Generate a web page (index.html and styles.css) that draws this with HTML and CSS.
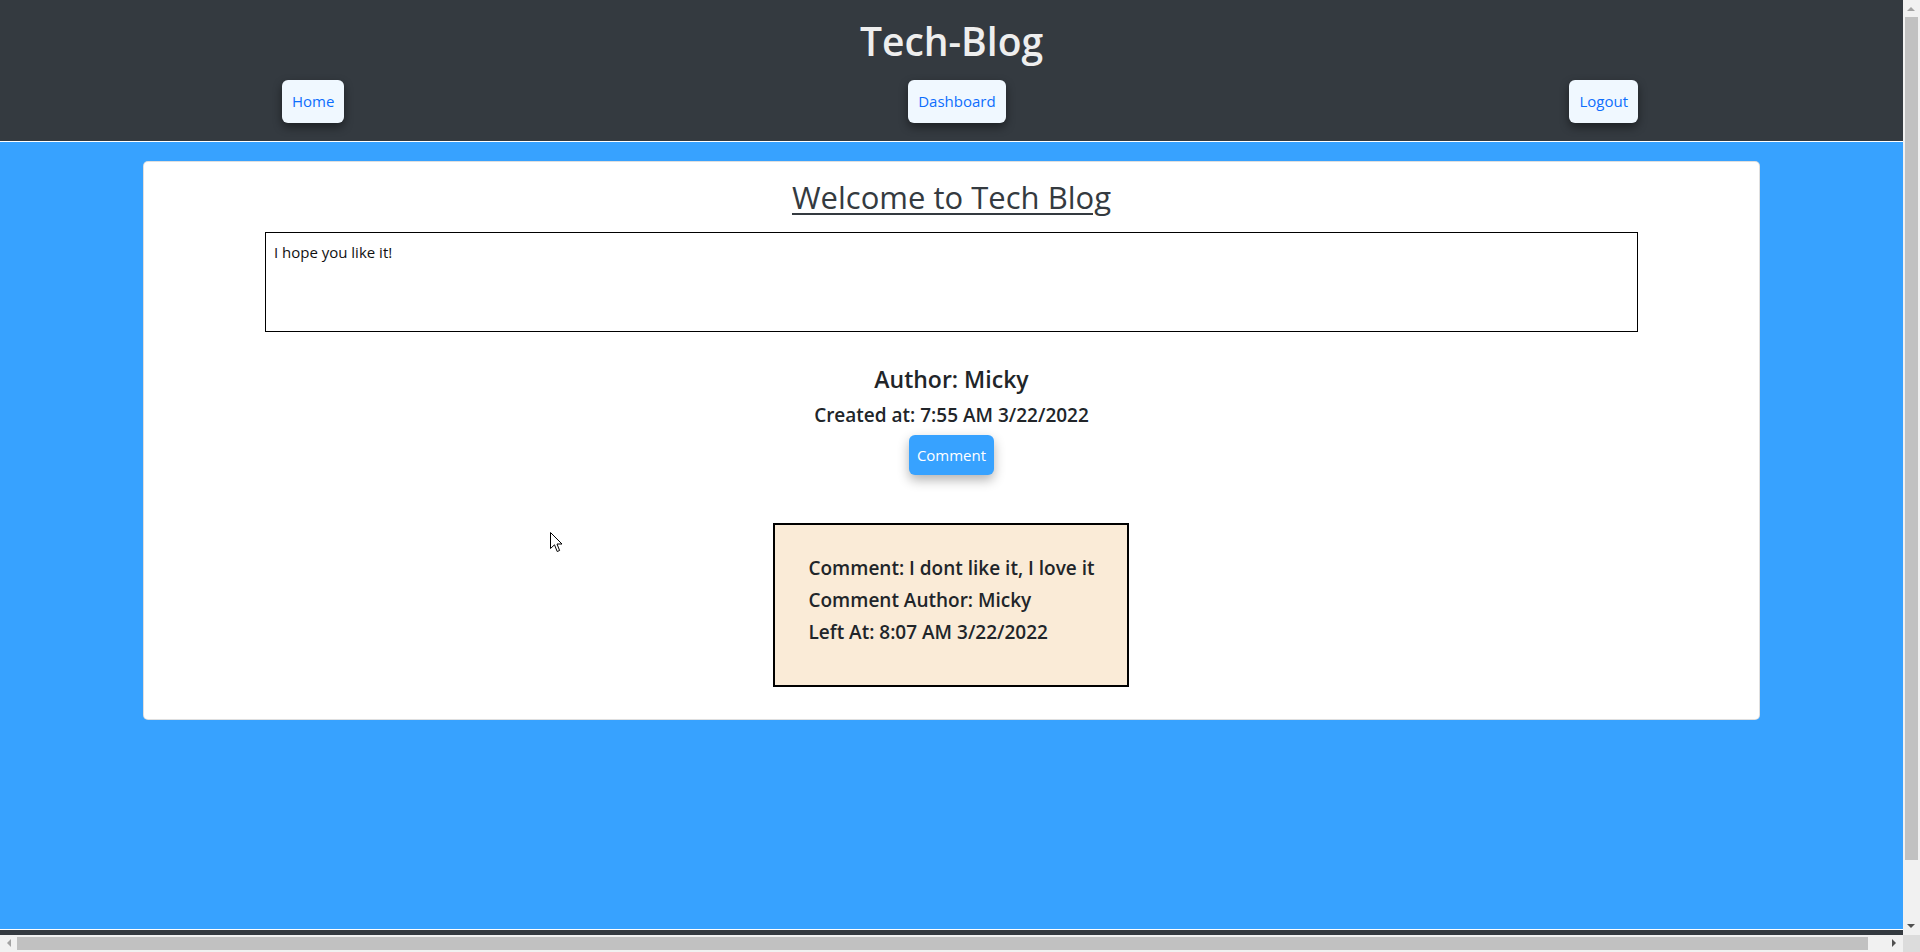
FILE: index.html
```html
<!DOCTYPE html>
<html lang="en">
<head>
<meta charset="utf-8">
<title>Tech-Blog</title>
<link rel="stylesheet" href="styles.css">
</head>
<body>
<div class="page">
  <header class="site-header">
    <h1 class="site-title">Tech-Blog</h1>
    <nav class="site-nav">
      <a class="nav-btn" href="#">Home</a>
      <a class="nav-btn" href="#">Dashboard</a>
      <a class="nav-btn" href="#">Logout</a>
    </nav>
  </header>
  <main class="main">
    <section class="post-card">
      <h2 class="post-title">Welcome to Tech Blog</h2>
      <textarea class="post-body" readonly>I hope you like it!</textarea>
      <h4 class="post-author">Author: Micky</h4>
      <h5 class="post-date">Created at: 7:55 AM 3/22/2022</h5>
      <button class="comment-btn" type="button">Comment</button>
      <div class="comment-box">
        <p class="comment-line">Comment: I dont like it, I love it</p>
        <p class="comment-line">Comment Author: Micky</p>
        <p class="comment-line">Left At: 8:07 AM 3/22/2022</p>
      </div>
    </section>
  </main>
  <footer class="site-footer"></footer>
</div>

<div class="vscroll" aria-hidden="true">
  <span class="arrow arrow-up"></span>
  <span class="vthumb"></span>
  <span class="arrow arrow-down"></span>
</div>
<div class="hscroll" aria-hidden="true">
  <span class="arrow arrow-left"></span>
  <span class="hthumb"></span>
  <span class="arrow arrow-right"></span>
</div>
<div class="scroll-corner" aria-hidden="true"></div>

<svg class="cursor" width="13" height="21" viewBox="0 0 13 21" aria-hidden="true">
  <path d="M0.5 0.5 L0.5 16.5 L4.5 12.8 L7.2 19.5 L9.6 18.5 L7 12 L12 12 Z" fill="#fff" stroke="#000" stroke-width="1" stroke-linejoin="round"/>
</svg>
</body>
</html>
```
FILE: styles.css
```css
html, body {
  margin: 0;
  padding: 0;
  overflow: hidden;
}

body {
  font-family: "Open Sans", "Liberation Sans", sans-serif;
  color: #212529;
  background: #fff;
  position: relative;
}

.page {
  width: 1903px;
}

.site-header {
  background: #343a40;
  height: 141px;
  padding-top: 17px;
  box-sizing: border-box;
}

.site-title {
  margin: 0;
  text-align: center;
  font-size: 39px;
  line-height: 47px;
  font-weight: 600;
  color: #eeeeee;
}

.site-nav {
  width: 1920px;
  display: flex;
  justify-content: space-around;
  margin-top: 16px;
}

.nav-btn {
  background: #f0f8ff;
  color: #0d6efd;
  border-radius: 6px;
  padding: 10px;
  font-size: 15px;
  line-height: 23px;
  text-decoration: none;
  box-shadow: 0 4px 10px rgba(0, 0, 0, 0.45);
}

.main {
  background: #37a2ff;
  border-top: 1px solid #fff;
  border-bottom: 1px solid #fff;
  padding-top: 19px;
  box-sizing: border-box;
  height: 789px;
}

.post-card {
  width: 85%;
  margin: 0 auto;
  background: #fff;
  border: 1px solid rgba(0, 0, 0, 0.125);
  border-radius: 5px;
  box-sizing: border-box;
  padding: 17px 0 32px;
  display: flex;
  flex-direction: column;
  align-items: center;
}

.post-title {
  margin: 0;
  font-size: 31px;
  line-height: 36px;
  font-weight: 500;
  color: #343a40;
  text-decoration: underline;
  text-decoration-thickness: 2px;
  text-underline-offset: 4px;
}

.post-body {
  width: 85%;
  height: 100px;
  margin-top: 17px;
  box-sizing: border-box;
  border: 1px solid #000;
  padding: 9px 8px;
  font-family: "Open Sans", "Liberation Sans", sans-serif;
  font-size: 15px;
  color: #111;
  resize: none;
  outline: none;
}

.post-author {
  margin: 33px 0 0;
  font-size: 23px;
  line-height: 29px;
  font-weight: 600;
}

.post-date {
  margin: 9px 0 0;
  font-size: 19px;
  line-height: 24px;
  font-weight: 600;
}

.comment-btn {
  margin-top: 8px;
  background: #37a2ff;
  color: #fff;
  border: none;
  border-radius: 6px;
  padding: 8px;
  font-family: "Open Sans", "Liberation Sans", sans-serif;
  font-size: 15px;
  line-height: 24px;
  box-shadow: 0 5px 12px rgba(0, 0, 0, 0.3);
}

.comment-box {
  margin-top: 48px;
  background: #faebd7;
  border: 2px solid #000;
  padding: 27px 33px 37px;
}

.comment-line {
  margin: 0;
  font-size: 19px;
  line-height: 32px;
  font-weight: 600;
}

.site-footer {
  background: #343a40;
  height: 70px;
}

/* simulated browser scrollbars */
.vscroll {
  position: fixed;
  top: 0;
  right: 0;
  width: 17px;
  height: 935px;
  background: #f1f1f1;
}

.vthumb {
  position: absolute;
  left: 2px;
  right: 2px;
  top: 17px;
  height: 843px;
  background: #c1c1c1;
}

.hscroll {
  position: fixed;
  left: 0;
  bottom: 0;
  width: 1903px;
  height: 17px;
  background: #f1f1f1;
}

.hthumb {
  position: absolute;
  top: 2px;
  bottom: 2px;
  left: 17px;
  width: 1851px;
  background: #c1c1c1;
}

.scroll-corner {
  position: fixed;
  right: 0;
  bottom: 0;
  width: 17px;
  height: 17px;
  background: #dcdcdc;
}

.arrow {
  position: absolute;
  width: 0;
  height: 0;
  border: 4px solid transparent;
}

.arrow-up {
  left: 4px;
  top: 3px;
  border-bottom-color: #a3a3a3;
}

.arrow-down {
  left: 4px;
  bottom: 3px;
  border-top-color: #505050;
}

.arrow-left {
  left: 3px;
  top: 4px;
  border-right-color: #a3a3a3;
}

.arrow-right {
  right: 3px;
  top: 4px;
  border-left-color: #505050;
}

.cursor {
  position: absolute;
  left: 550px;
  top: 532px;
}
```
